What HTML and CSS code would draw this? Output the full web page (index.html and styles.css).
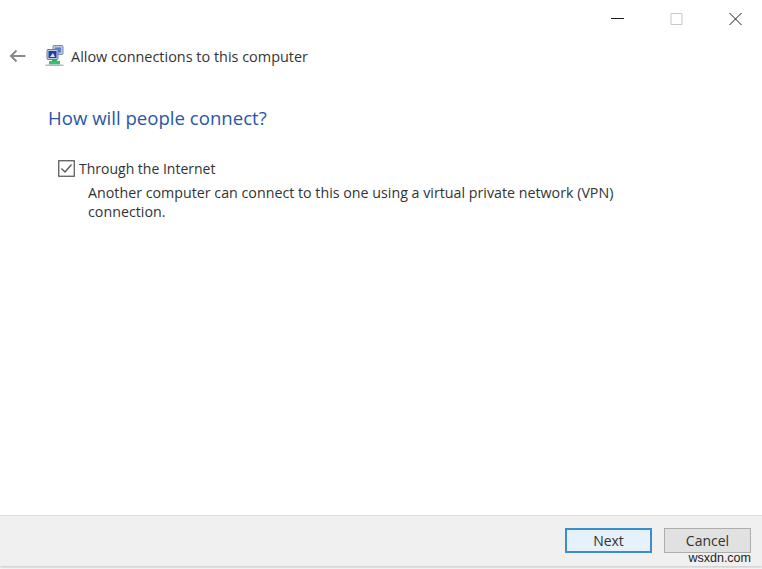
FILE: index.html
```html
<!DOCTYPE html>
<html lang="en">
<head>
<meta charset="utf-8">
<title>Allow connections to this computer</title>
<link rel="stylesheet" href="styles.css">
</head>
<body>
<div class="window">
  <div class="titlebar">
    <span class="control">
      <svg width="13" height="13" viewBox="0 0 13 13"><path d="M0 5.500H13" stroke="#1a1a1a" fill="none"/></svg>
    </span>
    <span class="control">
      <svg width="13" height="13" viewBox="0 0 13 13"><path d="M1 0.500H12V11.500H1Z" stroke="#c9c9c9" fill="none"/></svg>
    </span>
    <span class="control">
      <svg width="13" height="13" viewBox="0 0 13 13"><path d="M0.500 0L12.500 12M12.500 0L0.500 12" stroke="#1a1a1a" fill="none"/></svg>
    </span>
  </div>
  <div class="nav">
    <svg class="back" width="17" height="14" viewBox="0 0 17 14"><path d="M16.500 7H2M7.500 1.500L2 7L7.500 12.500" stroke="#8a8a8a" stroke-width="2" fill="none"/></svg>
    <svg class="app-icon" width="20" height="22" viewBox="0 0 20 22">
      <rect x="8" y="0.500" width="10" height="9" rx="1" fill="#b9c6de" stroke="#7d8cab"/>
      <rect x="10" y="2.500" width="6" height="5" fill="#5b7fc4"/>
      <rect x="2" y="4.500" width="11" height="10" rx="1" fill="#c5cfe2" stroke="#6c7a99"/>
      <rect x="3.500" y="6" width="8" height="7" fill="#1c3fa8"/>
      <path d="M5 12L8 8L10 12Z" fill="#dfe8f8"/>
      <rect x="7" y="14.500" width="5" height="3" fill="#2fae63"/>
      <rect x="4" y="16" width="11" height="3.500" fill="#35c076"/>
      <rect x="0.500" y="19.500" width="18" height="1.500" fill="#b7b7b7"/>
    </svg>
    <span class="nav-title">Allow connections to this computer</span>
  </div>
  <main class="content">
    <h1 class="heading">How will people connect?</h1>
    <div class="option">
      <svg class="check" width="17" height="17" viewBox="0 0 17 17">
        <rect x="0.750" y="0.750" width="15.500" height="15.500" fill="#fff" stroke="#4f4f4f" stroke-width="1.200"/>
        <path d="M3.500 8.500L7 12L13.500 4.500" fill="none" stroke="#555" stroke-width="1.300"/>
      </svg>
      <span class="option-label">Through the Internet</span>
    </div>
    <p class="option-desc">Another computer can connect to this one using a virtual private network (VPN) connection.</p>
  </main>
  <footer class="footer">
    <button class="btn btn-primary">Next</button>
    <button class="btn">Cancel</button>
  </footer>
</div>
<div class="watermark">wsxdn.com</div>
</body>
</html>
```

FILE: styles.css
```css
* { box-sizing: border-box; }
html, body { margin: 0; height: 100%; }
body {
  position: relative;
  width: 762px;
  height: 569px;
  overflow: hidden;
  background: #fff;
  font-family: "Open Sans", "Noto Sans", sans-serif;
  color: #333;
}
.window { display: flex; flex-direction: column; height: 566px; }
.titlebar {
  display: flex;
  justify-content: flex-end;
  gap: 46px;
  padding: 13px 20px 0 0;
  height: 41px;
}
.control { display: block; width: 13px; height: 13px; }
.control svg { display: block; }
.nav {
  display: flex;
  align-items: center;
  height: 30px;
  padding-left: 9px;
}
.back { margin-right: 19px; }
.app-icon { margin-right: 6px; }
.nav-title { font-size: 14.450px; }
.content { flex: 1; padding: 0 0 0 48px; }
.heading {
  margin: 34px 0 0;
  font-size: 18.600px;
  line-height: 26px;
  font-weight: 400;
  color: #2a56a6;
}
.option {
  display: flex;
  align-items: center;
  margin: 27px 0 0 10px;
  height: 20px;
}
.check { margin-right: 4px; }
.option-label { font-size: 14px; }
.option-desc {
  margin: 5px 0 0 40px;
  width: 560px;
  font-size: 14.250px;
  line-height: 19px;
}
.footer {
  display: flex;
  justify-content: flex-end;
  align-items: flex-start;
  gap: 12px;
  height: 51px;
  padding: 12px 11px 0 0;
  background: #f0f0f0;
  border-top: 1px solid #dfdfdf;
  box-shadow: 0 2px 2px #d2d2d2;
}
.btn {
  width: 87px;
  height: 25px;
  padding: 0;
  font: 14px "Open Sans", "Noto Sans", sans-serif;
  color: #333;
  background: #e1e1e1;
  border: 1px solid #adadad;
}
.btn-primary {
  background: #e5f1fb;
  border: 2px solid #3d8ccb;
}
.watermark {
  position: absolute;
  right: 11px;
  bottom: 4px;
  font: 12.500px "Liberation Sans", sans-serif;
  color: #222;
  line-height: 13px;
}
```
